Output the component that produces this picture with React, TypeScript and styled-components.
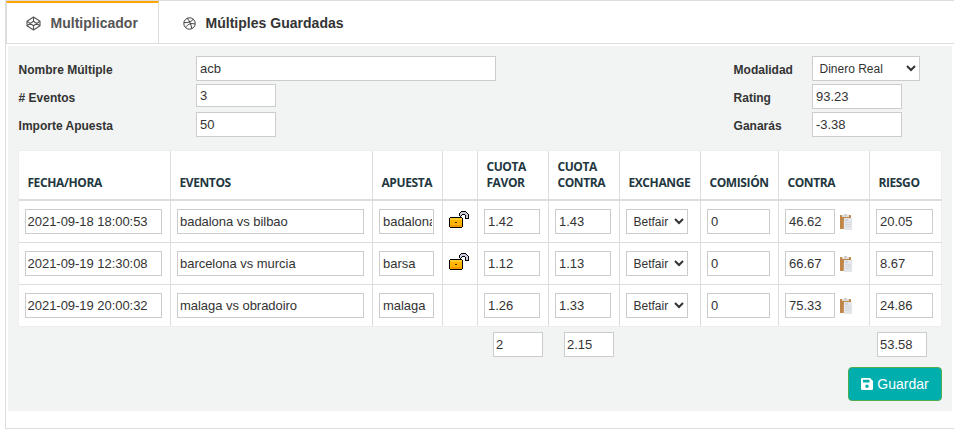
import React from 'react';
import styled, { createGlobalStyle, css } from 'styled-components';

const GlobalStyle = createGlobalStyle`
  * { box-sizing: border-box; }
  body { margin: 0; background: #fff; overflow: hidden; }
  body, input, select, button { font-family: 'Liberation Sans', Arial, sans-serif; }
`;

const Frame = styled.div`
  width: 960px;
  height: 429px;
  margin-left: 5px;
  border: 1px solid #ddd;
`;

const TabBar = styled.nav`
  display: flex;
  height: 43px;
  border-bottom: 1px solid #ddd;
`;

const Tab = styled.a<{ $active?: boolean }>`
  display: flex;
  align-items: center;
  width: ${p => (p.$active ? 153 : 220)}px;
  padding: ${p => (p.$active ? '0 0 0 19px' : '2px 0 0 24px')};
  color: ${p => (p.$active ? '#555' : '#333')};
  font-size: 14px;
  font-weight: 700;
  letter-spacing: 0.02px;
  white-space: nowrap;
  ${p => p.$active && css`
    border-top: 2px solid #ffa500;
    border-left: 1px solid #ddd;
    border-right: 1px solid #ddd;
  `}
  svg { flex: none; margin-right: 9.5px; }
`;

const Panel = styled.section`
  width: 944px;
  height: 365px;
  margin: 2px 0 0 2px;
  padding: 10px 10px 0;
  background: #f2f4f4;
`;

const Summary = styled.div`
  display: flex;
  justify-content: space-between;
  height: 94px;
  padding: 0 22px 0 0;
`;

const Fields = styled.div<{ $label: number }>`
  display: grid;
  grid-template-columns: ${p => p.$label}px auto;
  grid-auto-rows: 28px;
  justify-items: start;
  align-items: start;
`;

const Label = styled.label`
  padding-left: 0.6px;
  color: #333;
  font-size: 12px;
  font-weight: 700;
  line-height: 28px;
  white-space: nowrap;
`;

const fieldBox = css`
  display: block;
  height: 25px;
  margin: 0;
  border: 1px solid #ccc;
  border-radius: 0;
  background-color: #fff;
  color: #333;
  outline: 0;
`;

const Input = styled.input<{ $w: number; $h?: number; $pad?: number }>`
  ${fieldBox}
  width: ${p => p.$w}px;
  height: ${p => p.$h ?? 25}px;
  padding: 0 1px 0 ${p => p.$pad ?? 3}px;
  font-size: 13px;
  letter-spacing: -0.04px;
`;

const Select = styled.select<{ $w: number }>`
  ${fieldBox}
  width: ${p => p.$w}px;
  padding: 0 0 0 2.500px;
  font-size: 12px;
`;

const Grid = styled.div`
  width: 924px;
  border: 1px solid #eee;
  border-right: 0;
  background: #fff;
`;

const columns = '152px 202px 70px 35px 71px 71px 81px 78px 91px 72px';

const HeadRow = styled.div`
  display: grid;
  grid-template-columns: ${columns};
  height: 50px;
  border-bottom: 2px solid #ddd;
`;

const Row = styled.div`
  display: grid;
  grid-template-columns: ${columns};
  height: 42px;
  border-bottom: 1px solid #ddd;
  &:last-child { height: 41px; border-bottom: 0; }
`;

const cellEdge = css`
  border-right: 1px solid #ddd;
  &:last-child { border-right-color: #eee; }
`;

const HeadCell = styled.div`
  ${cellEdge}
  display: flex;
  align-items: flex-end;
  padding: 0 0 8px 8.400px;
  color: #23373f;
  font: 700 12px/16px 'Open Sans', sans-serif;
  letter-spacing: -0.38px;
`;

const Cell = styled.div`
  ${cellEdge}
  display: flex;
  align-items: flex-start;
  padding: 8px 0 0 6px;
  > svg { flex: none; }
`;

const Totals = styled.div`
  display: flex;
  height: 40px;
  padding: 5px 0 0 475px;
  input:nth-child(2) { margin-left: 21px; }
  input:nth-child(3) { margin-left: 263px; }
`;

const Actions = styled.div`
  display: flex;
  justify-content: flex-end;
`;

const SaveButton = styled.button`
  display: flex;
  align-items: center;
  justify-content: center;
  gap: 4px;
  width: 94px;
  height: 34px;
  padding: 0;
  border: 1px solid #4cae4c;
  border-radius: 4px;
  background: #00aeae;
  color: #fff;
  font-size: 14px;
`;

const LockIcon = styled(LockSvg)`
  margin: 2px 0 0;
`;

const ClipIcon = styled(ClipboardSvg)`
  margin: 5px 0 0 4px;
`;

function LockSvg({ className }: { className?: string }) {
  return (
    <svg className={className} width="20" height="17" viewBox="0 0 20 17" shapeRendering="crispEdges">
      <path fill="#c9ccdc" d="M12 1h5v1h1v1h1v4h-2V4h-1V3h-3v1h-1v1h-1V2h1z" />
      <path fill="#000" d="M12 0h5v1h-5zM11 1h1v1h-1zM17 1h1v1h-1zM10 2h1v3h-1zM18 2h1v1h-1zM19 3h1v5h-1zM13 3h3v1h-3zM12 4h1v1h-1zM16 4h1v4h-1zM11 5h1v1h-1zM17 7h2v1h-2z" />
      <path fill="#000" d="M1 6h12v1h1v9h-1v1H1v-1H0V7h1z" />
      <path fill="#ffb400" d="M1 7h12v9H1z" />
      <path fill="#ffca2c" d="M1 7h12v2H1z" />
      <path fill="#f39a00" d="M1 14h12v2H1z" />
      <path fill="#402a00" d="M6 11h2v1H6z" />
    </svg>
  );
}

function ClipboardSvg({ className }: { className?: string }) {
  return (
    <svg className={className} width="14" height="17" viewBox="0 0 14 17">
      <rect x="1" y="1" width="11" height="14" rx=".5" fill="#c08648" />
      <path d="M3 1h7v2H3z" fill="#dededb" />
      <path d="M5.500 0h2v1.500h-2z" fill="#bbb" />
      <path d="M5 4h8.200v12H4.700z" fill="#e4e6e9" />
      <path d="M6 6h3" stroke="#9db0c8" strokeWidth=".7" />
      <path d="M6 8.500h6M6 10.500h6M6 12.500h5" stroke="#d0d3d7" strokeWidth=".7" />
    </svg>
  );
}

function CodepenIcon() {
  return (
    <svg width="15" height="15" viewBox="0 0 15 15" fill="none" stroke="#555" strokeWidth="1.100" strokeLinejoin="round">
      <path d="M7.500 1 14 5.200v4.600L7.500 14 1 9.800V5.200z" />
      <path d="M7.500 1v4.200M7.500 14V9.800M1 5.200l6.500 4.600L14 5.200M1 9.800l6.500-4.600L14 9.800" />
    </svg>
  );
}

function DribbbleIcon() {
  return (
    <svg width="13" height="13" viewBox="0 0 13 13" fill="none" stroke="#333" strokeWidth=".95">
      <circle cx="6.500" cy="6.500" r="5.700" />
      <path d="M4.300 1.300c2.200 2.700 3.700 6 4.500 10.200M.9 5.700c3.900.1 7-.7 9.400-3.400M2.600 10.600C4.500 7.200 7.800 5.900 12.100 7" />
    </svg>
  );
}

function SaveIcon() {
  return (
    <svg width="12" height="12" viewBox="0 0 12 12">
      <path fill="#fff" fillRule="evenodd" d="M1.200 0H9l3 3v7.800a1.200 1.200 0 0 1-1.200 1.200H1.200A1.200 1.200 0 0 1 0 10.800V1.200A1.200 1.200 0 0 1 1.200 0zM2 1.800v2.700h6.500V1.800zM6 6.500a1.750 1.750 0 1 0 0 3.500 1.750 1.750 0 0 0 0-3.500z" />
    </svg>
  );
}

const headings = ['FECHA/HORA', 'EVENTOS', 'APUESTA', '', 'CUOTA FAVOR', 'CUOTA CONTRA', 'EXCHANGE', 'COMISIÓN', 'CONTRA', 'RIESGO'];

const bets = [
  { date: '2021-09-18 18:00:53', event: 'badalona vs bilbao', pick: 'badalona', lock: true, back: '1.42', lay: '1.43', stake: '46.62', risk: '20.05' },
  { date: '2021-09-19 12:30:08', event: 'barcelona vs murcia', pick: 'barsa', lock: true, back: '1.12', lay: '1.13', stake: '66.67', risk: '8.67' },
  { date: '2021-09-19 20:00:32', event: 'malaga vs obradoiro', pick: 'malaga', lock: false, back: '1.26', lay: '1.33', stake: '75.33', risk: '24.86' },
];

export default function App() {
  return (
    <>
      <GlobalStyle />
      <Frame>
        <TabBar>
          <Tab $active><CodepenIcon />Multiplicador</Tab>
          <Tab><DribbbleIcon />Múltiples Guardadas</Tab>
        </TabBar>
        <Panel>
          <Summary>
            <Fields $label={178}>
              <Label>Nombre Múltiple</Label>
              <Input $w={300} defaultValue="acb" />
              <Label># Eventos</Label>
              <Input $w={80} $h={23} defaultValue="3" />
              <Label>Importe Apuesta</Label>
              <Input $w={80} defaultValue="50" />
            </Fields>
            <Fields $label={79}>
              <Label>Modalidad</Label>
              <Select $w={108}><option>Dinero Real</option></Select>
              <Label>Rating</Label>
              <Input $w={90} defaultValue="93.23" />
              <Label>Ganarás</Label>
              <Input $w={90} defaultValue="-3.38" />
            </Fields>
          </Summary>
          <Grid>
            <HeadRow>
              {headings.map((h, i) => <HeadCell key={i}>{h}</HeadCell>)}
            </HeadRow>
            {bets.map(b => (
              <Row key={b.date}>
                <Cell><Input $w={137} $pad={1.6} defaultValue={b.date} /></Cell>
                <Cell><Input $w={187} $pad={2} defaultValue={b.event} /></Cell>
                <Cell><Input $w={55} defaultValue={b.pick} /></Cell>
                <Cell>{b.lock && <LockIcon />}</Cell>
                <Cell><Input $w={56} defaultValue={b.back} /></Cell>
                <Cell><Input $w={56} defaultValue={b.lay} /></Cell>
                <Cell><Select $w={62}><option>Betfair</option></Select></Cell>
                <Cell><Input $w={63} defaultValue="0" /></Cell>
                <Cell><Input $w={50} defaultValue={b.stake} /><ClipIcon /></Cell>
                <Cell><Input $w={57} defaultValue={b.risk} /></Cell>
              </Row>
            ))}
          </Grid>
          <Totals>
            <Input $w={50} $pad={2} defaultValue="2" />
            <Input $w={50} $pad={2} defaultValue="2.15" />
            <Input $w={50} $pad={2} defaultValue="53.58" />
          </Totals>
          <Actions>
            <SaveButton><SaveIcon />Guardar</SaveButton>
          </Actions>
        </Panel>
      </Frame>
    </>
  );
}
